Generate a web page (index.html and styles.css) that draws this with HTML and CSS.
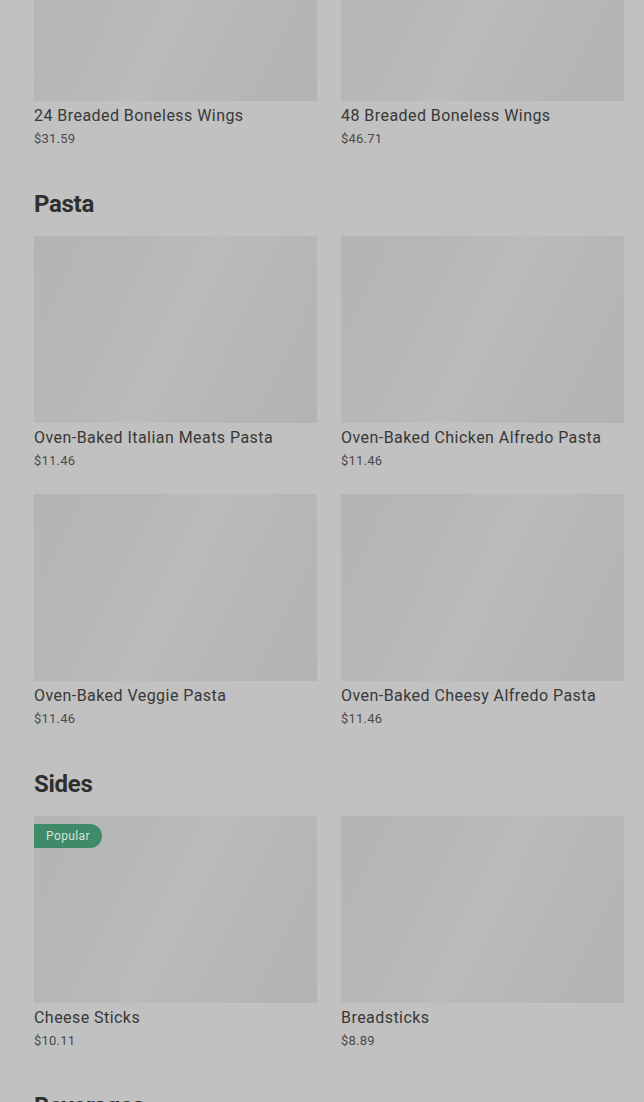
FILE: index.html
```html
<!DOCTYPE html>
<html lang="en">
<head>
  <meta charset="UTF-8" />
  <meta name="viewport" content="width=device-width, initial-scale=1.0"/>
  <title>Menu</title>
  <link rel="stylesheet" href="styles.css">
</head>
<body>

<div class="menu">
  <section class="section section-first">
    <div class="grid">
      <div class="item">
        <div class="thumb"></div>
        <div class="name">24 Breaded Boneless Wings</div>
        <div class="price">$31.59</div>
      </div>
      <div class="item">
        <div class="thumb"></div>
        <div class="name">48 Breaded Boneless Wings</div>
        <div class="price">$46.71</div>
      </div>
    </div>
  </section>

  <section class="section">
    <h2>Pasta</h2>
    <div class="grid">
      <div class="item">
        <div class="thumb"></div>
        <div class="name">Oven-Baked Italian Meats Pasta</div>
        <div class="price">$11.46</div>
      </div>
      <div class="item">
        <div class="thumb"></div>
        <div class="name">Oven-Baked Chicken Alfredo Pasta</div>
        <div class="price">$11.46</div>
      </div>
      <div class="item">
        <div class="thumb"></div>
        <div class="name">Oven-Baked Veggie Pasta</div>
        <div class="price">$11.46</div>
      </div>
      <div class="item">
        <div class="thumb"></div>
        <div class="name">Oven-Baked Cheesy Alfredo Pasta</div>
        <div class="price">$11.46</div>
      </div>
    </div>
  </section>

  <section class="section">
    <h2>Sides</h2>
    <div class="grid">
      <div class="item">
        <div class="thumb">
          <span class="badge">Popular</span>
        </div>
        <div class="name">Cheese Sticks</div>
        <div class="price">$10.11</div>
      </div>
      <div class="item">
        <div class="thumb"></div>
        <div class="name">Breadsticks</div>
        <div class="price">$8.89</div>
      </div>
    </div>
  </section>

  <section class="section">
    <h2>Beverages</h2>
  </section>
</div>

</body>
</html>
```

FILE: styles.css
```css
body {
  margin: 0;
  font-family: Roboto, 'Liberation Sans', sans-serif;
  background: #c1c1c1;
  color: #3a3a3a;
  overflow: hidden;
}

.menu {
  padding: 0 20px 0 34px;
}

.section {
  margin-top: 38px;
}

.section-first {
  margin-top: -86px;
}

h2 {
  margin: 0 0 16px;
  font-size: 24px;
  line-height: 32px;
  font-weight: 700;
  color: #2f2f2f;
  letter-spacing: -0.3px;
}

.grid {
  display: grid;
  grid-template-columns: 283px 283px;
  column-gap: 24px;
  row-gap: 22px;
}

.thumb {
  position: relative;
  height: 187px;
  margin-bottom: 3px;
  background: linear-gradient(116deg, #b4b4b4 0%, #b7b7b7 30%, #bbbbbb 50%, #b7b7b7 70%, #b3b3b3 100%);
}

.name {
  font-size: 16px;
  line-height: 24px;
  color: #383838;
  letter-spacing: 0.45px;
  white-space: nowrap;
}

.price {
  font-size: 13px;
  line-height: 22px;
  color: #4a4a4a;
  letter-spacing: 0.2px;
}

.badge {
  position: absolute;
  top: 8px;
  left: 0;
  height: 24px;
  padding: 0 12px;
  border-radius: 0 12px 12px 0;
  background: #3f8a68;
  color: #d4e4da;
  font-size: 12px;
  line-height: 24px;
  letter-spacing: 0.4px;
}
```
